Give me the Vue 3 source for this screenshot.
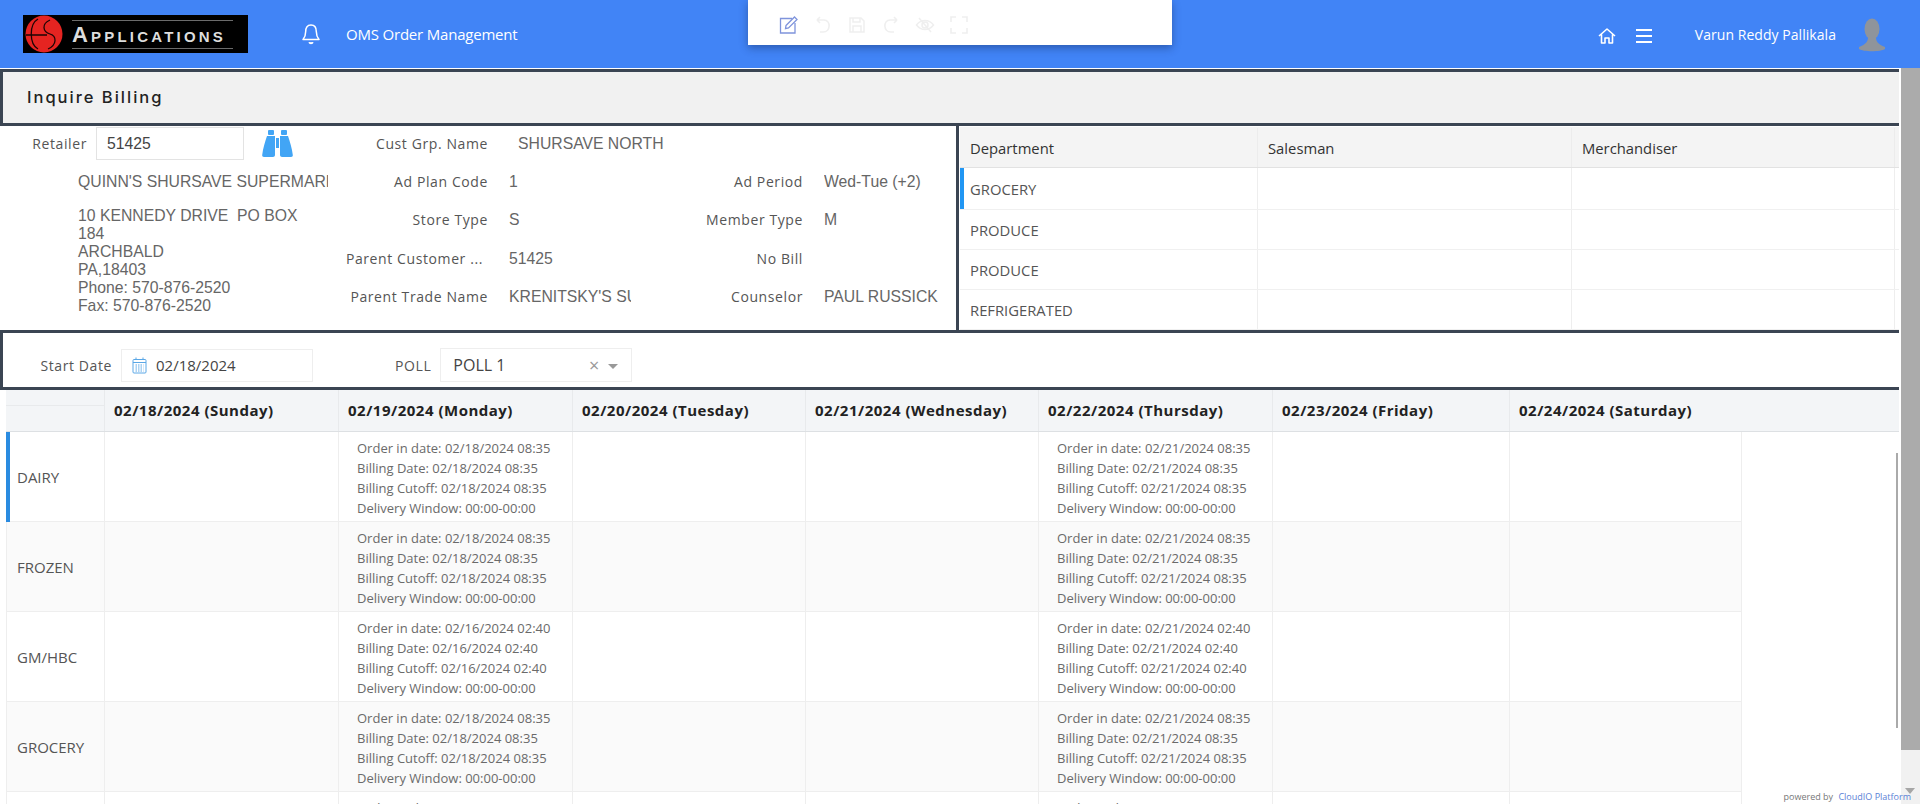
<template>
  <div class="app">
    <header class="topbar">
      <div class="logo">
        <svg class="logo__mark" width="42" height="38" viewBox="0 0 42 38">
          <circle cx="21" cy="19" r="18.500" fill="#e52421" />
          <path d="M15 4C6 9 6 29 15 34M3 20H24M27 5C18 9 20 17 27 19S34 30 25 34" fill="none" stroke="#1a0505" stroke-width="1.300" />
        </svg>
        <div class="logo__word">Applications</div>
      </div>
      <svg class="bell" width="20" height="22" viewBox="0 0 20 22" fill="none" stroke="#fff" stroke-width="1.500">
        <path d="M10 2C6 2 4.700 5 4.700 8.500C4.700 12.500 3.700 14.500 2 16.500H18C16.300 14.500 15.300 12.500 15.300 8.500C15.300 5 14 2 10 2Z" stroke-linejoin="round" />
        <path d="M8 19.300C8.600 20.800 11.400 20.800 12 19.300" fill="#fff" />
      </svg>
      <div class="app-name">OMS Order Management</div>

      <div class="toolbar">
        <svg width="20" height="20" viewBox="0 0 20 20" fill="none" stroke="#7f94dc" stroke-width="1.300">
          <path d="M13 3.500H1.500V18H16V8" />
          <path d="M7 10.500L15.500 2L18 4.500L9.500 13L6.500 13.700Z" />
        </svg>
        <svg width="20" height="20" viewBox="0 0 20 20" fill="none" stroke="#efefef" stroke-width="1.600">
          <path d="M4 5H11C18 5 18 17 10 17H7M4 5L7 2M4 5L7 8" />
        </svg>
        <svg width="20" height="20" viewBox="0 0 20 20" fill="none" stroke="#efefef" stroke-width="1.500">
          <path d="M3 3H14L17 6V17H3Z" />
          <path d="M6 3V7H13V3M6 17V11H14V17" />
        </svg>
        <svg width="20" height="20" viewBox="0 0 20 20" fill="none" stroke="#efefef" stroke-width="1.600">
          <path d="M16 5H9C2 5 2 17 10 17H13M16 5L13 2M16 5L13 8" />
        </svg>
        <svg width="20" height="20" viewBox="0 0 20 20" fill="none" stroke="#efefef" stroke-width="1.500">
          <path d="M1.500 10C6 4 14 4 18.500 10C14 16 6 16 1.500 10Z" />
          <circle cx="10" cy="10" r="3" />
          <path d="M4 3L16 17" />
        </svg>
        <svg width="20" height="20" viewBox="0 0 20 20" fill="none" stroke="#efefef" stroke-width="1.600">
          <path d="M2 7V2H7M13 2H18V7M18 13V18H13M7 18H2V13" />
        </svg>
      </div>

      <svg class="home" width="18" height="18" viewBox="0 0 18 18" fill="none" stroke="#fff" stroke-width="1.600">
        <path d="M1 9L9 2L17 9M3.500 7.500V16H7V11H11V16H14.500V7.500" stroke-linejoin="round" />
      </svg>
      <div class="burger"><i></i><i></i><i></i></div>
      <div class="user">Varun Reddy Pallikala</div>
      <svg class="avatar" width="26" height="34" viewBox="0 0 26 34" fill="#8f949b">
        <ellipse cx="13" cy="11" rx="7.500" ry="10.500" />
        <path d="M9 19H17C17 24 19 26 26 29V31C22 34 4 34 0 31V29C7 26 9 24 9 19Z" />
      </svg>
    </header>

    <div class="body">
      <main class="content">
        <div class="title-bar">Inquire Billing</div>

        <section class="info">
          <div class="info__form">
            <div class="customer">
              <div class="retailer">
                <label class="label retailer__label">Retailer</label>
                <div class="retailer__input">51425</div>
                <svg class="binoculars" width="31" height="27" viewBox="0 0 31 27" fill="#42a5f5">
                  <rect x="6" y="0" width="6" height="5" rx="1" />
                  <rect x="19" y="0" width="6" height="5" rx="1" />
                  <path d="M5 6H13V25C13 26 12 27 11 27H2C0.800 27 0 26 0.200 25C1 18 3 12 5 6Z" />
                  <path d="M18 6H26C28 12 30 18 30.800 25C31 26 30.200 27 29 27H20C19 27 18 26 18 25Z" />
                  <rect x="14" y="8" width="3" height="10" />
                </svg>
              </div>
              <div class="customer__name">QUINN'S SHURSAVE SUPERMARKET</div>
              <div class="customer__address">
                <div>10 KENNEDY DRIVE&nbsp; PO BOX 184</div>
                <div>ARCHBALD</div>
                <div>PA,18403</div>
                <div>Phone: 570-876-2520</div>
                <div>Fax: 570-876-2520</div>
              </div>
            </div>

            <div class="fields">
              <template v-for="row in fields" :key="row.label">
                <div class="label field__label" :class="{ 'field__label--cut': row.cut }">{{ row.label }}</div>
                <div class="value" :class="{ 'value--indent': row.indent }">{{ row.value }}</div>
                <div class="label field__label">{{ row.label2 }}</div>
                <div class="value">{{ row.value2 }}</div>
              </template>
            </div>
          </div>

          <div class="dept">
            <div class="dept__row dept__row--head">
              <div v-for="h in deptCols" :key="h" class="dept__cell">{{ h }}</div>
            </div>
            <div
              v-for="(d, i) in departments"
              :key="i"
              class="dept__row"
              :class="{ 'dept__row--active': i === 0 }"
            >
              <div class="dept__cell">{{ d }}</div>
              <div class="dept__cell"></div>
              <div class="dept__cell"></div>
            </div>
          </div>
        </section>

        <section class="filters">
          <label class="label filters__start">Start Date</label>
          <div class="date-input">
            <svg width="15" height="17" viewBox="0 0 15 17" fill="none" stroke="#5aa7e6" stroke-width="1">
              <rect x="1" y="2.500" width="13" height="13.500" rx="1" />
              <path d="M1 5.500H14M4 0.500V3M11 0.500V3" />
              <path d="M3.500 8H11.500M3.500 10H11.500M3.500 12H11.500M3.500 14H11.500" stroke-dasharray="1.500 1" />
            </svg>
            <span>02/18/2024</span>
          </div>
          <label class="label filters__poll">POLL</label>
          <div class="select">
            <span>POLL 1</span>
            <span class="select__clear">×</span>
            <span class="select__arrow"></span>
          </div>
        </section>

        <section class="schedule">
          <div class="sched__row sched__row--head">
            <div class="sched__corner"></div>
            <div v-for="d in dayCols" :key="d" class="sched__day">{{ d }}</div>
          </div>
          <div
            v-for="(row, i) in schedule"
            :key="i"
            class="sched__row"
            :class="{ 'sched__row--odd': i % 2 === 1, 'sched__row--active': i === 0 }"
          >
            <div class="sched__name">{{ row.name }}</div>
            <div v-for="n in 7" :key="n" class="sched__cell">
              <template v-if="n === 2 || n === 5">
                <div>Order in date: {{ n === 2 ? row.mon : row.thu }}</div>
                <div>Billing Date: {{ n === 2 ? row.mon : row.thu }}</div>
                <div>Billing Cutoff: {{ n === 2 ? row.mon : row.thu }}</div>
                <div>Delivery Window: 00:00-00:00</div>
              </template>
            </div>
          </div>
          <div class="inner-thumb"></div>
        </section>
      </main>

      <aside class="scrollbar">
        <div class="scrollbar__thumb"></div>
        <div class="scrollbar__arrow"></div>
      </aside>
    </div>

    <div class="powered">powered by <a>CloudIO Platform</a></div>
  </div>
</template>

<script setup>
const fields = [
  { label: 'Cust Grp. Name', value: 'SHURSAVE NORTH', indent: true, label2: '', value2: '' },
  { label: 'Ad Plan Code', value: '1', label2: 'Ad Period', value2: 'Wed-Tue (+2)' },
  { label: 'Store Type', value: 'S', label2: 'Member Type', value2: 'M' },
  { label: 'Parent Customer ...', cut: true, value: '51425', label2: 'No Bill', value2: '' },
  { label: 'Parent Trade Name', value: "KRENITSKY'S SUPER", label2: 'Counselor', value2: 'PAUL RUSSICK' }
]

const deptCols = ['Department', 'Salesman', 'Merchandiser']
const departments = ['GROCERY', 'PRODUCE', 'PRODUCE', 'REFRIGERATED']

const dayCols = [
  '02/18/2024 (Sunday)',
  '02/19/2024 (Monday)',
  '02/20/2024 (Tuesday)',
  '02/21/2024 (Wednesday)',
  '02/22/2024 (Thursday)',
  '02/23/2024 (Friday)',
  '02/24/2024 (Saturday)'
]

const schedule = [
  { name: 'DAIRY', mon: '02/18/2024 08:35', thu: '02/21/2024 08:35' },
  { name: 'FROZEN', mon: '02/18/2024 08:35', thu: '02/21/2024 08:35' },
  { name: 'GM/HBC', mon: '02/16/2024 02:40', thu: '02/21/2024 02:40' },
  { name: 'GROCERY', mon: '02/18/2024 08:35', thu: '02/21/2024 08:35' },
  { name: '', mon: '02/18/2024 10:35', thu: '02/21/2024 10:35' }
]
</script>

<style>
html,
body {
  margin: 0;
  overflow: hidden;
  background: #fff;
}
</style>

<style scoped>
.app {
  position: relative;
  height: 804px;
  overflow: hidden;
  font-family: "Open Sans", sans-serif;
  color: #555;
}

.topbar {
  position: relative;
  display: flex;
  align-items: center;
  height: 68px;
  padding-left: 23px;
  background: #4184f6;
  box-sizing: border-box;
}

.logo {
  display: flex;
  align-items: center;
  width: 225px;
  height: 38px;
  background: #000;
}

.logo__mark {
  flex: none;
}

.logo__word {
  flex: 1;
  margin: 0 15px 0 7px;
  border-top: 1px solid #6b6b6b;
  border-bottom: 1px solid #6b6b6b;
  color: #ddd;
  font: bold 22px/27px "Liberation Sans", sans-serif;
  font-variant: small-caps;
  letter-spacing: 3.2px;
  white-space: nowrap;
  overflow: hidden;
}

.bell {
  margin-left: 53px;
}

.app-name {
  margin-left: 25px;
  color: #fff;
  font-size: 15px;
  letter-spacing: -0.2px;
}

.toolbar {
  position: absolute;
  top: 0;
  left: 748px;
  display: flex;
  align-items: center;
  gap: 14px;
  width: 424px;
  height: 45px;
  padding: 5px 0 0 31px;
  box-sizing: border-box;
  background: #fff;
  box-shadow: 0 3px 8px rgba(20, 40, 90, 0.45);
}

.home {
  margin: 3px 0 0 auto;
}

.burger {
  display: flex;
  flex-direction: column;
  gap: 4px;
  width: 16px;
  margin: 3px 0 0 20px;
}

.burger i {
  height: 2px;
  background: #fff;
}

.user {
  margin-left: 43px;
  color: #fff;
  font-size: 14px;
  letter-spacing: 0.05px;
}

.avatar {
  margin: 2px 35px 0 23px;
}

.body {
  display: flex;
  height: 736px;
}

.content {
  position: relative;
  width: 1899px;
  flex: none;
}

.title-bar {
  height: 51px;
  margin-top: 1px;
  padding-left: 24px;
  border: solid #3b4553;
  border-width: 3px 0 3px 3px;
  background: #f1f1f1;
  color: #222;
  font: 500 16.500px/51px Inter, sans-serif;
  letter-spacing: 2px;
}

.info {
  display: flex;
  height: 204px;
  border-bottom: 3px solid #3b4553;
}

.info__form {
  display: flex;
  width: 956px;
  flex: none;
  border-right: 3px solid #3b4553;
}

.customer {
  width: 338px;
  flex: none;
  overflow: hidden;
}

.retailer {
  display: flex;
  align-items: center;
  height: 33px;
  margin-top: 1px;
}

.retailer__label {
  width: 87px;
  text-align: right;
}

.retailer__input {
  width: 148px;
  height: 33px;
  margin-left: 9px;
  padding-left: 10px;
  border: 1px solid #e3e3e3;
  box-sizing: border-box;
  color: #444;
  font: 15.750px/31px "Liberation Sans", sans-serif;
}

.binoculars {
  margin-left: 18px;
}

.customer__name {
  width: 250px;
  margin: 13px 0 0 78px;
  overflow: hidden;
  color: #666;
  font: 15.750px/18px "Liberation Sans", sans-serif;
  white-space: nowrap;
}

.customer__address {
  width: 230px;
  margin: 16px 0 0 78px;
  color: #666;
  font: 15.750px/18px "Liberation Sans", sans-serif;
}

.fields {
  display: grid;
  grid-template-columns: 150px 143px 172px 1fr;
  grid-auto-rows: 38.400px;
  align-content: start;
  margin-top: -1.500px;
}

.label {
  font-size: 14px;
  letter-spacing: 0.6px;
  color: #555;
  white-space: nowrap;
}

.field__label {
  align-self: center;
  margin-top: -1px;
  text-align: right;
}

.field__label--cut {
  padding-right: 5px;
}

.value {
  align-self: center;
  overflow: hidden;
  margin-left: 21px;
  color: #666;
  font: 15.750px/20px "Liberation Sans", sans-serif;
  white-space: nowrap;
}

.fields .value:nth-child(4n + 2) {
  width: 122px;
}

.value--indent {
  padding-left: 9px;
}

.fields .value--indent:nth-child(4n + 2) {
  width: 200px;
}

.dept {
  flex: 1;
  border-left: 1px solid #fff;
}

.dept__row {
  position: relative;
  display: grid;
  grid-template-columns: 298px 314px 323px;
  height: 40px;
  border-bottom: 1px solid #f0f0f0;
  box-sizing: border-box;
}

.dept__row--head {
  height: 41px;
  margin-top: 1px;
  padding-top: 1px;
  background: #f4f4f4;
  border-bottom: 1px solid #e2e2e2;
}

.dept__row--active {
  height: 42px;
}

.dept__row--active::before {
  content: "";
  position: absolute;
  left: 0;
  top: 0;
  bottom: 0;
  width: 4px;
  background: #2196f3;
}

.dept__cell {
  display: flex;
  align-items: center;
  padding-left: 10px;
  border-right: 1px solid #eee;
  font-size: 14.800px;
  color: #555;
}

.dept__row--head .dept__cell {
  border-right-color: #ececec;
  color: #333;
}

.filters {
  display: flex;
  align-items: center;
  height: 44px;
  padding-top: 10px;
  border: solid #3b4553;
  border-width: 0 0 3px 3px;
}

.filters__start {
  width: 109px;
  text-align: right;
}

.date-input {
  display: flex;
  align-items: center;
  gap: 9px;
  width: 192px;
  height: 33px;
  margin-left: 9px;
  padding-left: 10px;
  border: 1px solid #eee;
  box-sizing: border-box;
  color: #444;
  font-size: 15px;
}

.filters__poll {
  margin-left: 82px;
}

.select {
  display: flex;
  align-items: center;
  width: 192px;
  height: 34px;
  margin-left: 9px;
  padding-left: 12px;
  border: 1px solid #eee;
  box-sizing: border-box;
  color: #444;
  font-size: 16px;
}

.select__clear {
  margin-left: auto;
  color: #999;
  font-size: 18px;
}

.select__arrow {
  width: 0;
  height: 0;
  margin: 2px 13px 0 9px;
  border: 5px solid transparent;
  border-top-color: #999;
  border-bottom: 0;
}

.schedule {
  position: relative;
  margin-left: 6px;
}

.sched__row {
  position: relative;
  display: grid;
  grid-template-columns: 99px 234px 234px 233px 233px 234px 237px 232px;
  height: 90px;
}

.sched__row--head {
  height: 42px;
  background: #f3f5f7;
  border-bottom: 1px solid #dde0e3;
  box-sizing: border-box;
}

.sched__row--odd {
  background: linear-gradient(#fafafa, #fafafa) 0 0 / 1736px 100% no-repeat;
}

.sched__row--active::before {
  content: "";
  position: absolute;
  left: 0;
  top: 0;
  bottom: 0;
  width: 4px;
  background: #2a8be0;
}

.sched__corner {
  border-right: 1px solid #e8eaec;
  background: linear-gradient(#e8eaec, #e8eaec) 0 15px / 100% 1px no-repeat;
}

.sched__day {
  padding-left: 9px;
  border-right: 1px solid #e8eaec;
  color: #222;
  font-size: 15px;
  font-weight: 700;
  letter-spacing: 0.5px;
  line-height: 41px;
  white-space: nowrap;
}

.sched__day:last-child {
  border-right: 0;
}

.sched__name {
  display: flex;
  align-items: center;
  padding-left: 10px;
  border-right: 1px solid #eee;
  border-bottom: 1px solid #eee;
  border-left: 1px solid #eee;
  box-sizing: border-box;
  color: #555;
  font-size: 15px;
}

.sched__cell {
  padding: 6px 0 0 18px;
  border-right: 1px solid #eee;
  border-bottom: 1px solid #eee;
  box-sizing: border-box;
  color: #6a6a6a;
  font-size: 13px;
  line-height: 20px;
  white-space: nowrap;
}

.inner-thumb {
  position: absolute;
  top: 63px;
  right: 1px;
  width: 2px;
  height: 275px;
  background: #aaa;
}

.scrollbar {
  position: relative;
  flex: 1;
  margin-left: 2px;
  background: #f1f1f1;
}

.scrollbar__thumb {
  height: 682px;
  background: #ababab;
}

.scrollbar__arrow {
  position: absolute;
  left: 4px;
  top: 720px;
  border: 5px solid transparent;
  border-top: 6px solid #a6a6a6;
  border-bottom: 0;
}

.powered {
  position: absolute;
  right: 9px;
  bottom: 0;
  color: #777;
  font-size: 9px;
  line-height: 14px;
}

.powered a {
  margin-left: 3px;
  color: #5b82d6;
}
</style>
